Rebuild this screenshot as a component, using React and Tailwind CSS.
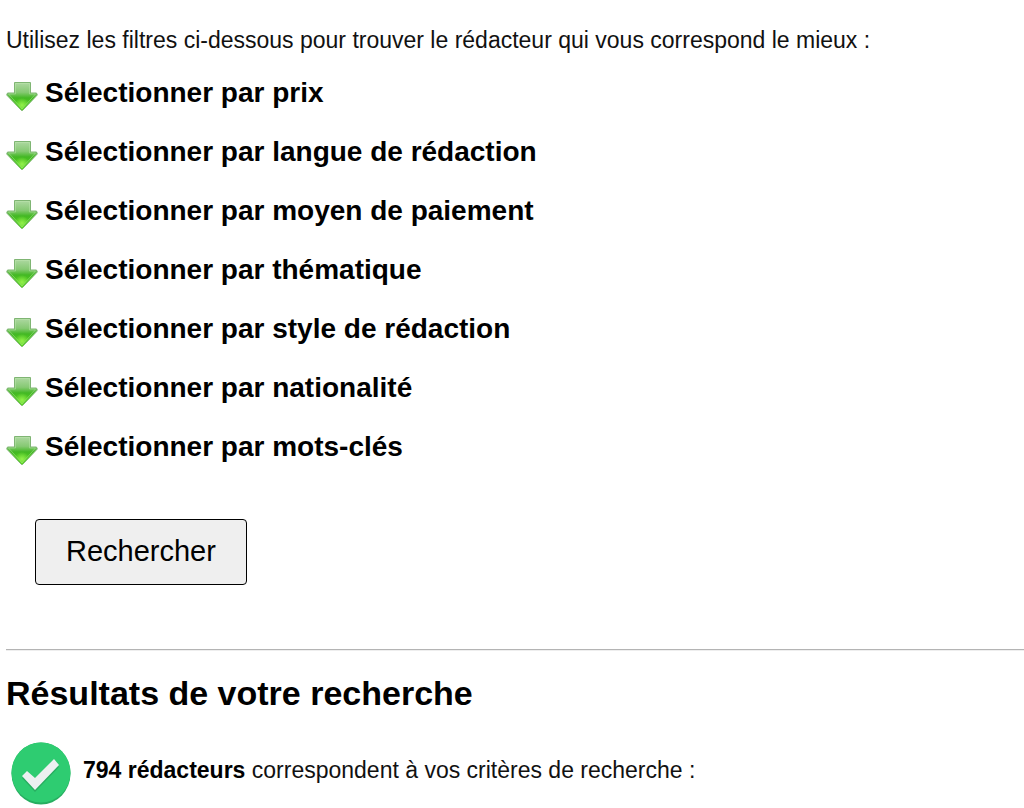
const filters = [
    "Sélectionner par prix",
    "Sélectionner par langue de rédaction",
    "Sélectionner par moyen de paiement",
    "Sélectionner par thématique",
    "Sélectionner par style de rédaction",
    "Sélectionner par nationalité",
    "Sélectionner par mots-clés",
];

const ArrowIcon = () => (
    <svg className="w-8 h-8 shrink-0" viewBox="0 0 32 32" aria-hidden="true">
        <defs>
            <linearGradient id="arrow-fill" x1="0" y1="0" x2="0" y2="1">
                <stop offset="0" stopColor="#aed8a2" />
                <stop offset="0.35" stopColor="#86c973" />
                <stop offset="0.55" stopColor="#43b824" />
                <stop offset="1" stopColor="#5bdc18" />
            </linearGradient>
            <radialGradient id="arrow-glow" cx="0.5" cy="0.85" r="0.28">
                <stop offset="0" stopColor="#93f04c" />
                <stop offset="1" stopColor="#93f04c" stopOpacity="0" />
            </radialGradient>
        </defs>
        <path d="M8.500 1.500H24.500V12H30.500L31.300 14L16.500 29.500H15.500L0.700 14L1.500 12H8.500Z" fill="url(#arrow-fill)" stroke="#7fb573" strokeLinejoin="round" />
        <path d="M9.500 2.500H23.500V13H29.500L16 28L2.500 13H9.500Z" fill="url(#arrow-glow)" stroke="#c4ecb4" strokeOpacity="0.4" strokeLinejoin="round" />
    </svg>
);

const CheckIcon = () => (
    <svg className="w-[60px] h-[63px] shrink-0" viewBox="0 0 60 63" aria-hidden="true">
        <ellipse cx="30" cy="31.500" rx="29.500" ry="31" fill="#27ae60" />
        <ellipse cx="30" cy="30.500" rx="29.500" ry="30" fill="#2ecc71" />
        <path d="M11 36L16 31L24 38L43 19L48 25L24 50Z" fill="#27ae60" />
        <path d="M11 34L16 29L24 36L43 17L48 23L24 48Z" fill="#ecf0f1" />
    </svg>
);

const App = () => {
    return (
        <main className="bg-white pl-1.5 pt-6 text-black font-['Liberation_Sans',Arial,sans-serif]">
            <p className="text-[23px] leading-8 text-[#111]">
                Utilisez les filtres ci-dessous pour trouver le rédacteur qui vous correspond le mieux :
            </p>

            <div className="pt-[7px]">
                {filters.map((label) => (
                    <h3 key={label} className="flex h-[59px] items-center gap-[7px] text-[28px] font-bold">
                        <span className="pt-2">
                            <ArrowIcon />
                        </span>
                        {label}
                    </h3>
                ))}
            </div>

            <button type="button" className="mt-[43px] ml-[29px] h-[66px] px-[30px] rounded border border-black bg-[#efefef] text-[29px]">
                Rechercher
            </button>

            <hr className="mt-16 border-t border-b border-t-[#b4b4b4] border-b-[#eeeeee]" />

            <h2 className="mt-[22px] text-[34px] leading-10 font-bold">Résultats de votre recherche</h2>

            <div className="mt-[29px] flex items-center gap-3 pl-[5px]">
                <CheckIcon />
                <p className="pb-2 text-[23px] leading-8 text-[#111]">
                    <strong className="text-black">794 rédacteurs</strong> correspondent à vos critères de recherche :
                </p>
            </div>
        </main>
    );
};

export default App;
